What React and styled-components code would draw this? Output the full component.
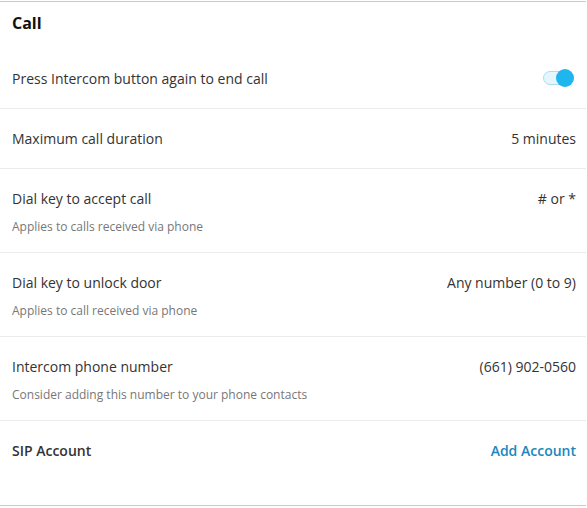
import React, { useState } from 'react';
import styled, { createGlobalStyle } from 'styled-components';

const GlobalStyle = createGlobalStyle`
    body {
        margin: 0;
        background-color: #fff;
        font-family: "Open Sans", "Liberation Sans", sans-serif;
        color: #333;
    }
`;

const Panel = styled.section`
    width: 586px;
    border-top: 1px solid #c9c9c9;
    border-bottom: 1px solid #c9c9c9;
    margin: 1px 0 0 0;
    padding: 0 0 24px 0;
    box-sizing: border-box;
`;

const PanelTitle = styled.h3`
    margin: 0;
    height: 47px;
    padding: 0 12px 5px 12px;
    box-sizing: border-box;
    display: flex;
    align-items: center;
    font-size: 16px;
    font-weight: 700;
    color: #111;
`;

const Row = styled.div`
    display: flex;
    justify-content: space-between;
    align-items: ${props => (props.$sub ? 'flex-start' : 'center')};
    height: ${props => (props.$sub ? '84px' : '60px')};
    padding: ${props => (props.$sub ? '20px 10px 0 12px' : props.$last ? '0 10px 1px 12px' : '1px 10px 0 12px')};
    box-sizing: border-box;
    border-bottom: ${props => (props.$last ? 'none' : '1px solid #ececec')};
`;

const Label = styled.div`
    display: flex;
    flex-direction: column;
    gap: 9px;
`;

const LabelText = styled.span`
    font-size: 14px;
    line-height: 20px;
    font-weight: ${props => (props.$strong ? 600 : 400)};
    color: #333;
`;

const SubText = styled.span`
    font-size: 12px;
    line-height: 18px;
    color: #777;
`;

const Value = styled.span`
    font-size: 14px;
    line-height: 20px;
    color: #333;
`;

const LinkButton = styled.button`
    border: none;
    background-color: transparent;
    padding: 0;
    font-family: inherit;
    font-size: 14px;
    line-height: 20px;
    font-weight: 600;
    color: #1a87bd;
    cursor: pointer;
`;

const Toggle = styled.button`
    position: relative;
    width: 30px;
    height: 20px;
    border: none;
    padding: 0;
    margin: 0 3px 0 0;
    background-color: transparent;
    cursor: pointer;
    &::before {
        content: '';
        position: absolute;
        left: 0;
        top: 2px;
        width: 28px;
        height: 14px;
        border-radius: 7px;
        box-sizing: border-box;
        border: 1px solid ${props => (props.$on ? '#a9def5' : '#ccc')};
        background-color: ${props => (props.$on ? '#e6f6fd' : '#f2f2f2')};
    }
    &::after {
        content: '';
        position: absolute;
        top: 0;
        left: ${props => (props.$on ? '13px' : '-2px')};
        width: 18px;
        height: 18px;
        border-radius: 50%;
        background-color: ${props => (props.$on ? '#1fb5ef' : '#bbb')};
        transition-duration: 0.2s;
    }
`;

const rows = [
    { label: 'Maximum call duration', value: '5 minutes' },
    { label: 'Dial key to accept call', sub: 'Applies to calls received via phone', value: '# or *' },
    { label: 'Dial key to unlock door', sub: 'Applies to call received via phone', value: 'Any number (0 to 9)' },
    { label: 'Intercom phone number', sub: 'Consider adding this number to your phone contacts', value: '(661) 902-0560' },
];

const App = () => {
    const [endCall, setEndCall] = useState(true);

    return (
        <>
            <GlobalStyle />
            <Panel>
                <PanelTitle>Call</PanelTitle>
                <Row>
                    <LabelText>Press Intercom button again to end call</LabelText>
                    <Toggle $on={endCall} aria-label="toggle" onClick={() => setEndCall(!endCall)} />
                </Row>
                {rows.map(row => (
                    <Row key={row.label} $sub={!!row.sub}>
                        <Label>
                            <LabelText>{row.label}</LabelText>
                            {row.sub && <SubText>{row.sub}</SubText>}
                        </Label>
                        <Value>{row.value}</Value>
                    </Row>
                ))}
                <Row $last>
                    <LabelText $strong>SIP Account</LabelText>
                    <LinkButton>Add Account</LinkButton>
                </Row>
            </Panel>
        </>
    );
};

export default App;
